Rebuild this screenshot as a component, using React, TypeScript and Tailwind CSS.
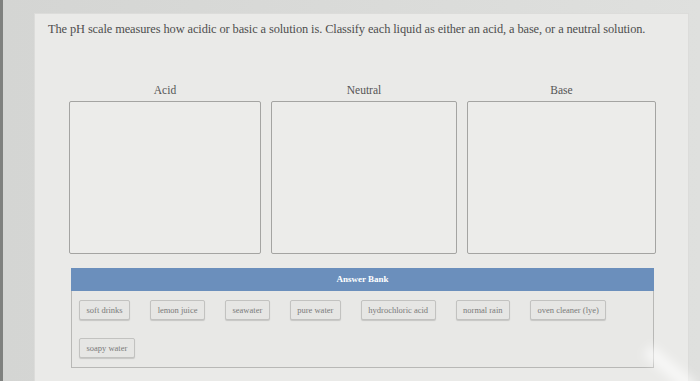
import React from "react";

const serif = { fontFamily: '"Liberation Serif", "Times New Roman", serif' };

function Chip({ label }: { label: string }) {
  return (
    <div className="h-[20px] px-[6.5px] flex items-center rounded-[2px] border border-[#c2c2c0] bg-[#e6e6e4] shadow-[0_1px_1px_rgba(0,0,0,0.15)] text-[8.5px] text-[#7a7a7a] whitespace-nowrap">
      {label}
    </div>
  );
}

export default function App() {
  const row1 = ["soft drinks", "lemon juice", "seawater", "pure water", "hydrochloric acid", "normal rain", "oven cleaner (lye)"];
  return (
    <div className="relative w-[700px] h-[381px] overflow-hidden bg-[#d9dad8] flex" style={serif}>
      <div className="w-[3px] h-full bg-[#7f817f]" />
      <div className="flex-1 pl-[31px] pt-[13px] pr-[11px] bg-gradient-to-r from-[#d4d5d3] to-[#dfe0de]">
        <div className="h-full bg-[#eaeae8] border-l border-t border-r border-[#dcdcda] pt-[8px]">
          <p className="pl-[13px] text-[12.4px] leading-[14px] text-[#4e4e4e] tracking-[-0.1px]">
            The pH scale measures how acidic or basic a solution is. Classify each liquid as either an acid, a base, or a neutral solution.
          </p>
          <div className="mt-[47px] pl-[34px] flex gap-[10px]">
            <div className="w-[192px] flex flex-col items-center">
              <div className="text-[11.5px] leading-[14px] text-[#555] mb-[4px]">Acid</div>
              <div className="w-full h-[153px] border border-[#a4a4a2] rounded-[2px] bg-[#ececea]" />
            </div>
            <div className="w-[186px] flex flex-col items-center">
              <div className="text-[11.5px] leading-[14px] text-[#555] mb-[4px]">Neutral</div>
              <div className="w-full h-[153px] border border-[#a4a4a2] rounded-[2px] bg-[#ececea]" />
            </div>
            <div className="w-[189px] flex flex-col items-center">
              <div className="text-[11.5px] leading-[14px] text-[#555] mb-[4px]">Base</div>
              <div className="w-full h-[153px] border border-[#a4a4a2] rounded-[2px] bg-[#ececea]" />
            </div>
          </div>
          <div className="ml-[36px] mt-[14px] w-[583px]">
            <div className="h-[23px] bg-[#6b8fbc] flex items-center justify-center text-[9px] font-bold text-white">
              Answer Bank
            </div>
            <div className="h-[77px] border border-t-0 border-[#b8b8b6] bg-[#e8e8e6] pl-[7px] pt-[9px] flex flex-col gap-[18px]">
              <div className="flex gap-[20px]">
                {row1.map((l) => (
                  <Chip key={l} label={l} />
                ))}
              </div>
              <div className="flex">
                <Chip label="soapy water" />
              </div>
            </div>
          </div>
        </div>
      </div>
      <div className="absolute right-[0px] bottom-[5px] w-[60px] h-[14px] bg-white/60 blur-[5px] rotate-[40deg]" />
    </div>
  );
}
